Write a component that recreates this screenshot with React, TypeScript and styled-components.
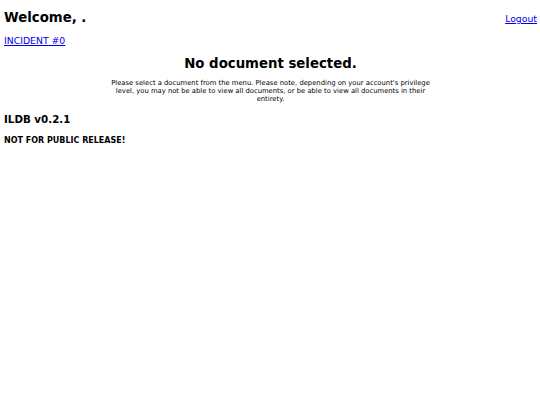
import React from "react";
import styled, { createGlobalStyle } from "styled-components";

const Global = createGlobalStyle`
  html, body { margin: 0; padding: 0; background: #fff; }
  body { font-family: "DejaVu Sans", Verdana, sans-serif; color: #000; }
`;

const Page = styled.div`
  padding: 0 3px 0 4px;
`;

const Header = styled.div`
  display: flex;
  justify-content: space-between;
  align-items: flex-start;
  padding-top: 9.7px;
`;

const Welcome = styled.h1`
  margin: 0;
  font-size: 13.3px;
  font-weight: bold;
  line-height: 16px;
`;

const Link = styled.a`
  color: #0000ee;
  text-decoration: underline;
  font-size: 9.3px;
  line-height: 11px;
  cursor: pointer;
`;

const LogoutWrap = styled.div`
  padding-top: 1.6px;
  line-height: 11px;
`;

const IncidentRow = styled.div`
  margin-top: 7.2px;
  line-height: 11px;
`;

const Main = styled.div`
  display: flex;
  flex-direction: column;
  align-items: center;
  margin-top: 10px;
`;

const Title = styled.h2`
  margin: 0;
  font-size: 13.3px;
  font-weight: bold;
  line-height: 16px;
`;

const Note = styled.p`
  margin: 6.8px 0 0;
  width: 325px;
  text-align: center;
  font-size: 6.8px;
  line-height: 8.3px;
`;

const Version = styled.h3`
  margin: 9.7px 0 0;
  font-size: 10.3px;
  font-weight: bold;
  line-height: 12px;
`;

const Warning = styled.p`
  margin: 11.1px 0 0;
  font-size: 8px;
  font-weight: bold;
  line-height: 10px;
`;

export default function App() {
  return (
    <>
      <Global />
      <Page>
        <Header>
          <Welcome>Welcome, .</Welcome>
          <LogoutWrap>
            <Link>Logout</Link>
          </LogoutWrap>
        </Header>
        <IncidentRow>
          <Link>INCIDENT #0</Link>
        </IncidentRow>
        <Main>
          <Title>No document selected.</Title>
          <Note>
            Please select a document from the menu. Please note, depending on your
            account's privilege level, you may not be able to view all documents, or be
            able to view all documents in their entirety.
          </Note>
        </Main>
        <Version>ILDB v0.2.1</Version>
        <Warning>NOT FOR PUBLIC RELEASE!</Warning>
      </Page>
    </>
  );
}
